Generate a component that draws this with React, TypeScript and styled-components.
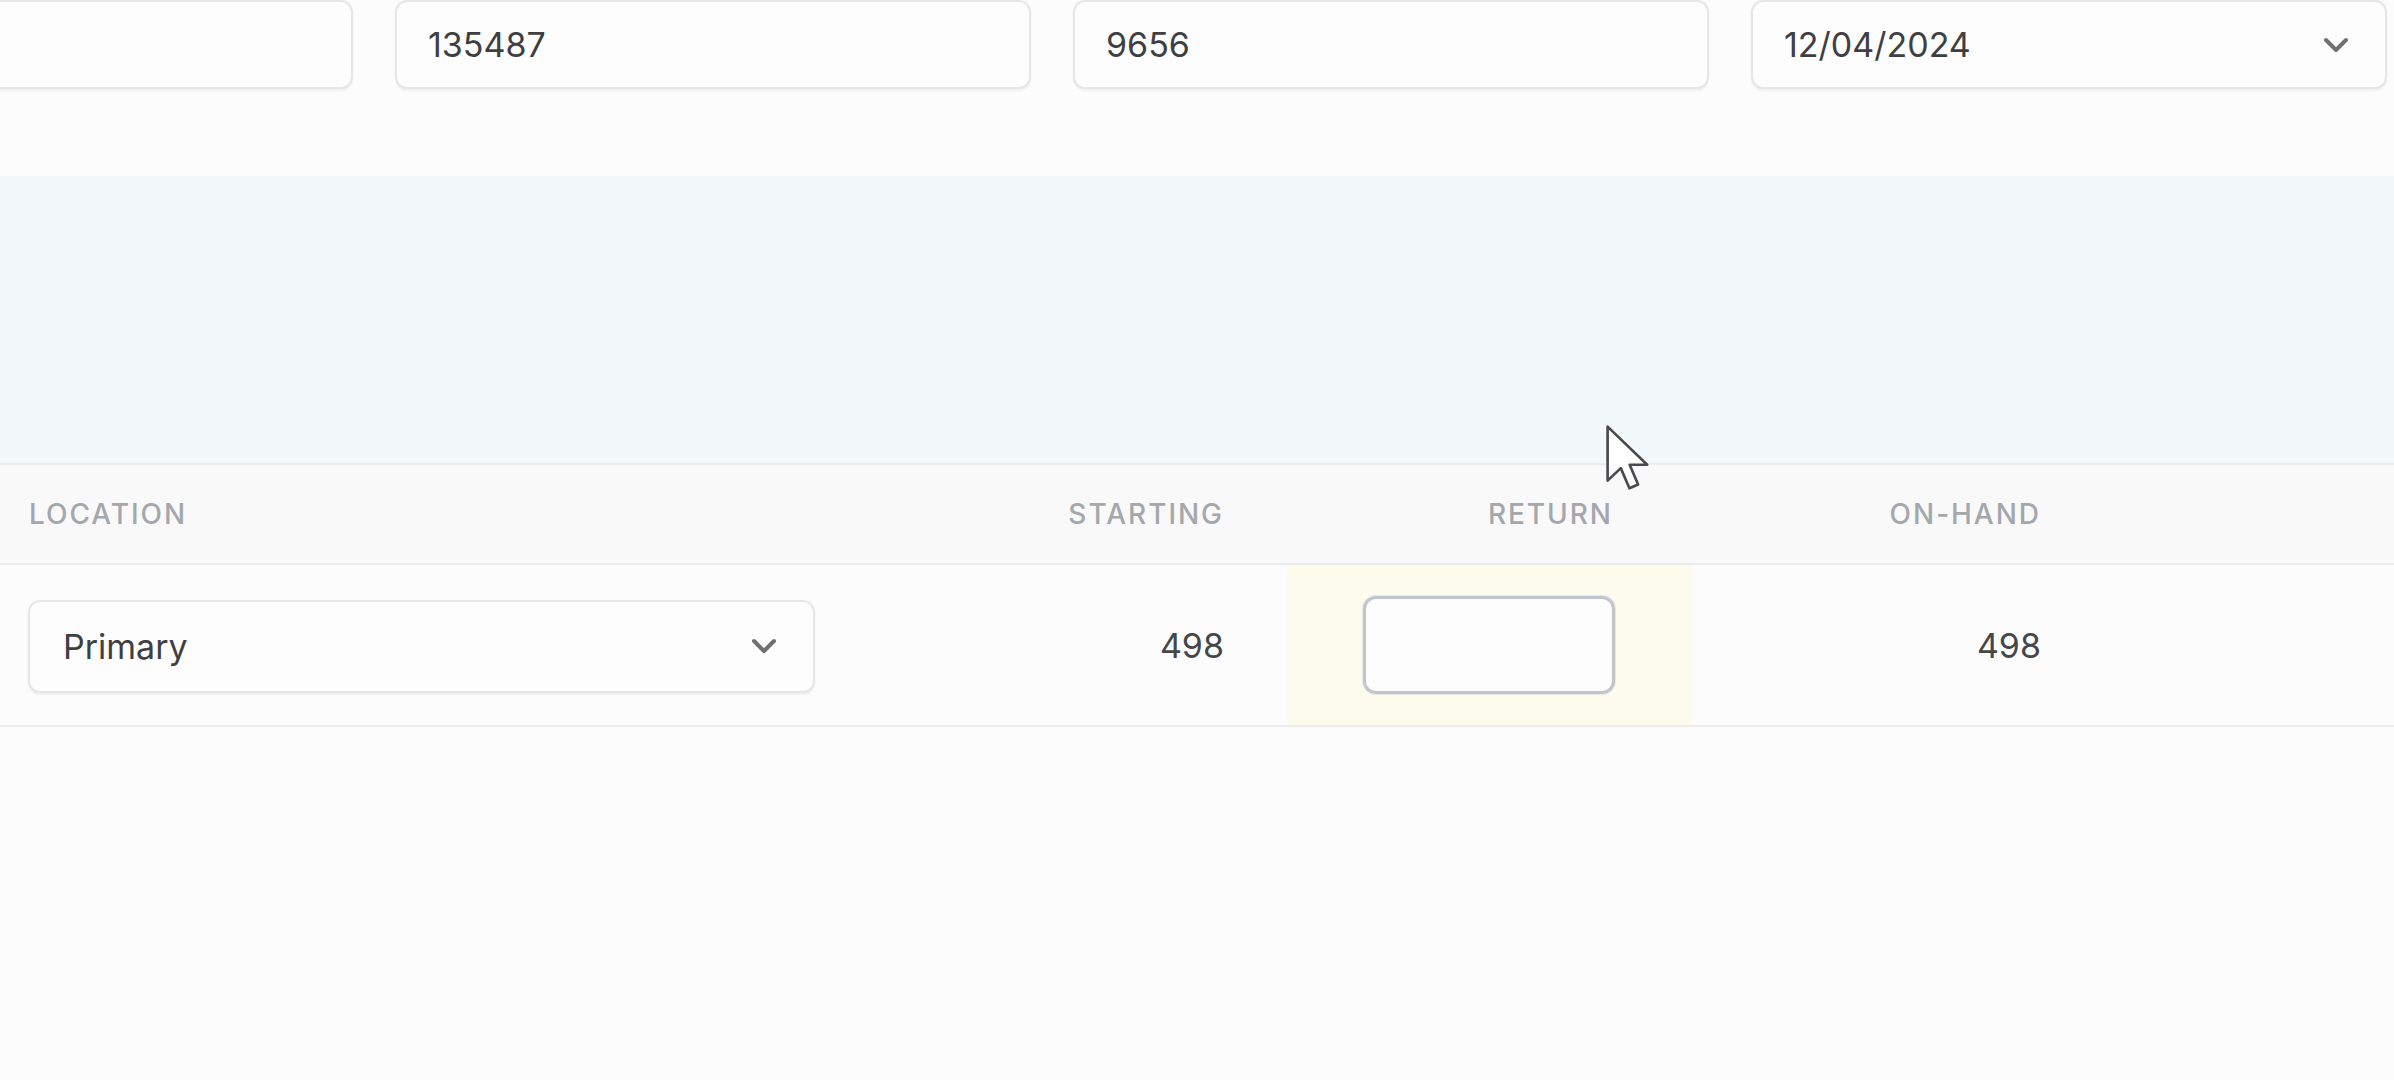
import styled, { createGlobalStyle } from 'styled-components';

const GlobalStyle = createGlobalStyle`
  html, body {
    margin: 0;
    padding: 0;
    background: #fcfcfc;
    font-family: Inter, "Noto Sans", "Liberation Sans", sans-serif;
    overflow: hidden;
  }
`;

const Page = styled.div`
  position: relative;
  width: 2394px;
  height: 1080px;
  overflow: hidden;
  background: #fcfcfc;
`;

const FilterRow = styled.div`
  display: grid;
  grid-template-columns: repeat(4, 636px);
  column-gap: 42px;
  margin-left: -283px;
`;

const Field = styled.div`
  box-sizing: border-box;
  height: 89px;
  display: flex;
  align-items: center;
  justify-content: space-between;
  padding: 0 36px 0 31px;
  background: #fdfdfd;
  border: 2px solid #e6e6e8;
  border-radius: 12px;
  box-shadow: 0 2px 2px rgba(0, 0, 0, 0.05);
  font-size: 34px;
  color: #3f3f42;
`;

const Banner = styled.div`
  margin-top: 87px;
  height: 287px;
  background: #f3f8fb;
`;

const Row = styled.div<{ $head?: boolean }>`
  display: grid;
  grid-template-columns: 860px 427px 405px 413px 1fr;
  box-sizing: border-box;
  height: ${(p) => (p.$head ? '102px' : '162px')};
  border-top: ${(p) => (p.$head ? '2px solid #ebecec' : 'none')};
  border-bottom: 2px solid #ebecec;
  background: ${(p) => (p.$head ? '#f9f9f9' : '#fcfcfc')};
`;

const Cell = styled.div<{ $align?: 'left' | 'right'; $pad?: number; $hl?: boolean }>`
  display: flex;
  align-items: center;
  justify-content: ${(p) => (p.$align === 'right' ? 'flex-end' : 'flex-start')};
  padding: ${(p) =>
    p.$align === 'right' ? `0 ${p.$pad ?? 0}px 0 0` : `0 0 0 ${p.$pad ?? 0}px`};
  background: ${(p) => (p.$hl ? '#fdfbeb' : 'transparent')};
`;

const HeadLabel = styled.span`
  font-size: 28px;
  font-weight: 500;
  letter-spacing: 0.07em;
  text-transform: uppercase;
  color: #a4a7ab;
`;

const Value = styled.span`
  font-size: 34px;
  color: #45464a;
`;

const Select = styled(Field)`
  width: 787px;
  height: 93px;
  padding: 0 36px 0 33px;
  margin-top: 2px;
`;

const ReturnInput = styled.div`
  box-sizing: border-box;
  width: 252px;
  height: 98px;
  background: #fdfdfd;
  border: 3px solid #c6c3cc;
  border-top-color: #bfc6d2;
  border-radius: 13px;
  box-shadow: 0 0 0 1px rgba(190, 205, 225, 0.35);
`;

const Cursor = styled.svg`
  position: absolute;
  left: 1604px;
  top: 423px;
`;

const Chevron = () => (
  <svg width="26" height="18" viewBox="0 0 26 18" fill="none" stroke="#707074" strokeWidth="4" strokeLinecap="round" strokeLinejoin="round">
    <path d="M3 4l10 10L23 4" />
  </svg>
);

export default function App() {
  return (
    <Page>
      <GlobalStyle />
      <FilterRow>
        <Field />
        <Field>135487</Field>
        <Field>9656</Field>
        <Field>
          12/04/2024
          <Chevron />
        </Field>
      </FilterRow>

      <Banner />

      <Row $head>
        <Cell $pad={29}>
          <HeadLabel>Location</HeadLabel>
        </Cell>
        <Cell $align="right" $pad={63}>
          <HeadLabel>Starting</HeadLabel>
        </Cell>
        <Cell $align="right" $pad={79}>
          <HeadLabel>Return</HeadLabel>
        </Cell>
        <Cell $align="right" $pad={64}>
          <HeadLabel>On-hand</HeadLabel>
        </Cell>
        <Cell />
      </Row>

      <Row>
        <Cell $pad={28}>
          <Select>
            Primary
            <Chevron />
          </Select>
        </Cell>
        <Cell $align="right" $pad={63}>
          <Value>498</Value>
        </Cell>
        <Cell $align="right" $pad={77} $hl>
          <ReturnInput />
        </Cell>
        <Cell $align="right" $pad={64}>
          <Value>498</Value>
        </Cell>
        <Cell />
      </Row>

      <Cursor width="48" height="72" viewBox="0 0 20 30">
        <path
          d="M1.5 1.5 L1.5 24 L7 18.8 L10.6 27.2 L14.2 25.6 L10.7 17.4 L18 17.4 Z"
          fill="#ffffff"
          stroke="#4a4a4e"
          strokeWidth="1.1"
          strokeLinejoin="round"
        />
      </Cursor>
    </Page>
  );
}
